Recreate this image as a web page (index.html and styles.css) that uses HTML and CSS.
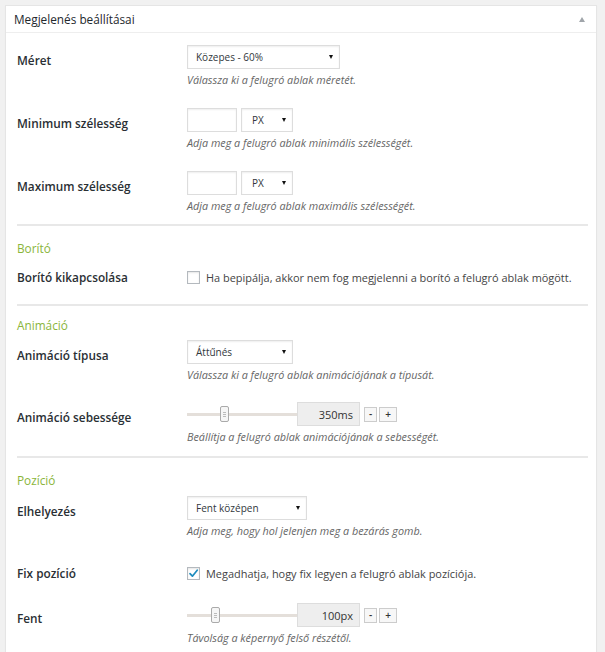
FILE: index.html
```html
<!DOCTYPE html>
<html lang="hu">
<head>
<meta charset="utf-8">
<title>Megjelenés beállításai</title>
<link rel="stylesheet" href="styles.css">
</head>
<body>
<div class="panel">
  <div class="panel-head">
    <span class="panel-title">Megjelenés beállításai</span>
    <span class="toggle"></span>
  </div>
  <div class="panel-body">
    <div class="row first">
      <div class="lbl">Méret</div>
      <div class="field">
        <div class="ctrls">
          <div class="sel w153"><span>Közepes - 60%</span><i class="arr"></i></div>
        </div>
        <div class="desc">Válassza ki a felugró ablak méretét.</div>
      </div>
    </div>
    <div class="row">
      <div class="lbl">Minimum szélesség</div>
      <div class="field">
        <div class="ctrls">
          <div class="num"></div>
          <div class="sel w52"><span>PX</span><i class="arr"></i></div>
        </div>
        <div class="desc">Adja meg a felugró ablak minimális szélességét.</div>
      </div>
    </div>
    <div class="row">
      <div class="lbl">Maximum szélesség</div>
      <div class="field">
        <div class="ctrls">
          <div class="num"></div>
          <div class="sel w52"><span>PX</span><i class="arr"></i></div>
        </div>
        <div class="desc">Adja meg a felugró ablak maximális szélességét.</div>
      </div>
    </div>
    <hr class="div d1">
    <h3 class="sec s1">Borító</h3>
    <div class="row check r-borito">
      <div class="lbl">Borító kikapcsolása</div>
      <label class="cb"><span class="box"></span><span class="cbtext">Ha bepipálja, akkor nem fog megjelenni a borító a felugró ablak mögött.</span></label>
    </div>
    <hr class="div">
    <h3 class="sec s2">Animáció</h3>
    <div class="row r-type">
      <div class="lbl">Animáció típusa</div>
      <div class="field">
        <div class="ctrls">
          <div class="sel w106"><span>Áttűnés</span><i class="arr"></i></div>
        </div>
        <div class="desc">Válassza ki a felugró ablak animációjának a típusát.</div>
      </div>
    </div>
    <div class="row r-speed">
      <div class="lbl">Animáció sebessége</div>
      <div class="field">
        <div class="ctrls">
          <div class="slider"><span class="thumb t1"></span></div>
          <div class="val">350ms</div>
          <div class="btn minus">-</div>
          <div class="btn plus">+</div>
        </div>
        <div class="desc">Beállítja a felugró ablak animációjának a sebességét.</div>
      </div>
    </div>
    <hr class="div">
    <h3 class="sec s3">Pozíció</h3>
    <div class="row r-pos">
      <div class="lbl">Elhelyezés</div>
      <div class="field">
        <div class="ctrls">
          <div class="sel w120"><span>Fent középen</span><i class="arr"></i></div>
        </div>
        <div class="desc">Adja meg, hogy hol jelenjen meg a bezárás gomb.</div>
      </div>
    </div>
    <div class="row check r-fix">
      <div class="lbl">Fix pozíció</div>
      <label class="cb"><span class="box checked"><svg viewBox="0 0 13 13" width="13" height="13"><path d="M3 6.6 L5.4 9.2 L10.2 3.2" fill="none" stroke="#1e8cbe" stroke-width="1.7" stroke-linecap="round" stroke-linejoin="round"/></svg></span><span class="cbtext">Megadhatja, hogy fix legyen a felugró ablak pozíciója.</span></label>
    </div>
    <div class="row r-top">
      <div class="lbl">Fent</div>
      <div class="field">
        <div class="ctrls">
          <div class="slider"><span class="thumb t2"></span></div>
          <div class="val">100px</div>
          <div class="btn minus">-</div>
          <div class="btn plus">+</div>
        </div>
        <div class="desc">Távolság a képernyő felső részétől.</div>
      </div>
    </div>
  </div>
</div>
</body>
</html>
```

FILE: styles.css
```css
html, body {
  margin: 0;
  background: #f1f1f1;
}
body {
  padding: 5px 8px 0 5px;
  font-family: "Open Sans", "Noto Sans", sans-serif;
  color: #23282d;
}
.panel {
  background: #fff;
  border: 1px solid #e5e5e5;
  border-bottom: none;
  box-shadow: 0 1px 1px rgba(0,0,0,.04);
  height: 660px;
}
.panel-head {
  height: 26px;
  border-bottom: 1px solid #eee;
  display: flex;
  align-items: center;
  justify-content: space-between;
  padding: 0 10px 0 8px;
}
.panel-title {
  font-size: 11.8px;
  color: #23282d;
}
.toggle {
  width: 0;
  height: 0;
  border-left: 3.5px solid transparent;
  border-right: 3.5px solid transparent;
  border-bottom: 5px solid #a0a5aa;
  margin-right: 1px;
}
.panel-body {
  padding: 0 8px 0 11px;
}
.row {
  display: grid;
  grid-template-columns: 170px 1fr;
  padding: 12px 0 9px;
}
.lbl {
  font-size: 11.8px;
  font-weight: 600;
  line-height: 16px;
  padding-top: 7px;
  color: #2a2f34;
}
.ctrls {
  display: flex;
  align-items: center;
  gap: 4px;
  height: 24px;
}
.desc {
  margin-top: 3px;
  font-size: 10.8px;
  line-height: 15px;
  font-style: italic;
  color: #666;
}
.sel {
  box-sizing: border-box;
  height: 24px;
  border: 1px solid #ddd;
  background: #fff;
  box-shadow: inset 0 1px 2px rgba(0,0,0,.07);
  display: flex;
  align-items: center;
  justify-content: space-between;
  padding: 0 6px 0 8px;
  font-size: 10px;
  color: #32373c;
}
.w153 { width: 153px; }
.w52 { width: 52px; padding-left: 10px; }
.w106 { width: 106px; }
.w120 { width: 120px; }
.arr {
  width: 0;
  height: 0;
  border-left: 2.5px solid transparent;
  border-right: 2.5px solid transparent;
  border-top: 4.5px solid #111;
}
.num {
  box-sizing: border-box;
  width: 50px;
  height: 24px;
  border: 1px solid #ddd;
  box-shadow: inset 0 1px 2px rgba(0,0,0,.07);
  background: #fff;
}
.div {
  border: none;
  border-top: 2px solid #e8e8e8;
  margin: 0;
}
.d1 { margin-top: 2px; }
.sec {
  margin: 0;
  font-size: 11.8px;
  font-weight: 400;
  line-height: 16px;
  color: #8ab53a;
}
.s1 { margin-top: 14px; }
.s2 { margin-top: 11px; }
.s3 { margin-top: 14px; }
.row.check .lbl {
  padding-top: 0;
  line-height: 18px;
}
.r-borito { padding: 12px 0 18px; }
.r-type { padding: 7px 0 9px; }
.r-speed { padding: 11px 0 12px; }
.r-pos { padding: 8px 0 9px; }
.r-fix { padding: 17px 0 9px; }
.r-top { padding: 12px 0 9px; }
.cb {
  display: flex;
  align-items: center;
  height: 18px;
}
.box {
  box-sizing: border-box;
  width: 13px;
  height: 13px;
  border: 1px solid #b4b9be;
  background: #fff;
  box-shadow: inset 0 1px 2px rgba(0,0,0,.1);
  margin-right: 6px;
  position: relative;
  flex: none;
}
.box svg {
  position: absolute;
  left: -1px;
  top: -1px;
}
.cbtext {
  font-size: 10.95px;
  color: #444;
}
.slider {
  width: 110px;
  height: 3px;
  background: #e4dfda;
  position: relative;
  margin-right: -4px;
}
.thumb {
  position: absolute;
  top: -7px;
  box-sizing: border-box;
  width: 9px;
  height: 16px;
  border: 1px solid #aaa;
  border-radius: 2px;
  background: repeating-linear-gradient(to bottom, #f6f6f6 0, #f6f6f6 5px, #bbb 5px, #bbb 6px, #f6f6f6 6px, #f6f6f6 7px, #bbb 7px, #bbb 8px, #f6f6f6 8px, #f6f6f6 9px, #bbb 9px, #bbb 10px, #f6f6f6 10px);
  background-size: 3px 100%;
  background-repeat: no-repeat;
  background-position: center;
  background-color: #f6f6f6;
}
.t1 { left: 33px; }
.t2 { left: 24px; }
.val {
  box-sizing: border-box;
  width: 63px;
  height: 24px;
  border: 1px solid #ddd;
  background: #eee;
  font-size: 11px;
  color: #333;
  display: flex;
  align-items: center;
  justify-content: flex-end;
  padding-right: 6px;
}
.btn {
  box-sizing: border-box;
  height: 15px;
  border: 1px solid #ccc;
  background: #f7f7f7;
  font-size: 10px;
  font-weight: 600;
  color: #333;
  display: flex;
  align-items: center;
  justify-content: center;
  line-height: 1;
}
.minus { width: 13px; margin-left: 0; }
.plus { width: 18px; margin-left: -2px; }
```
